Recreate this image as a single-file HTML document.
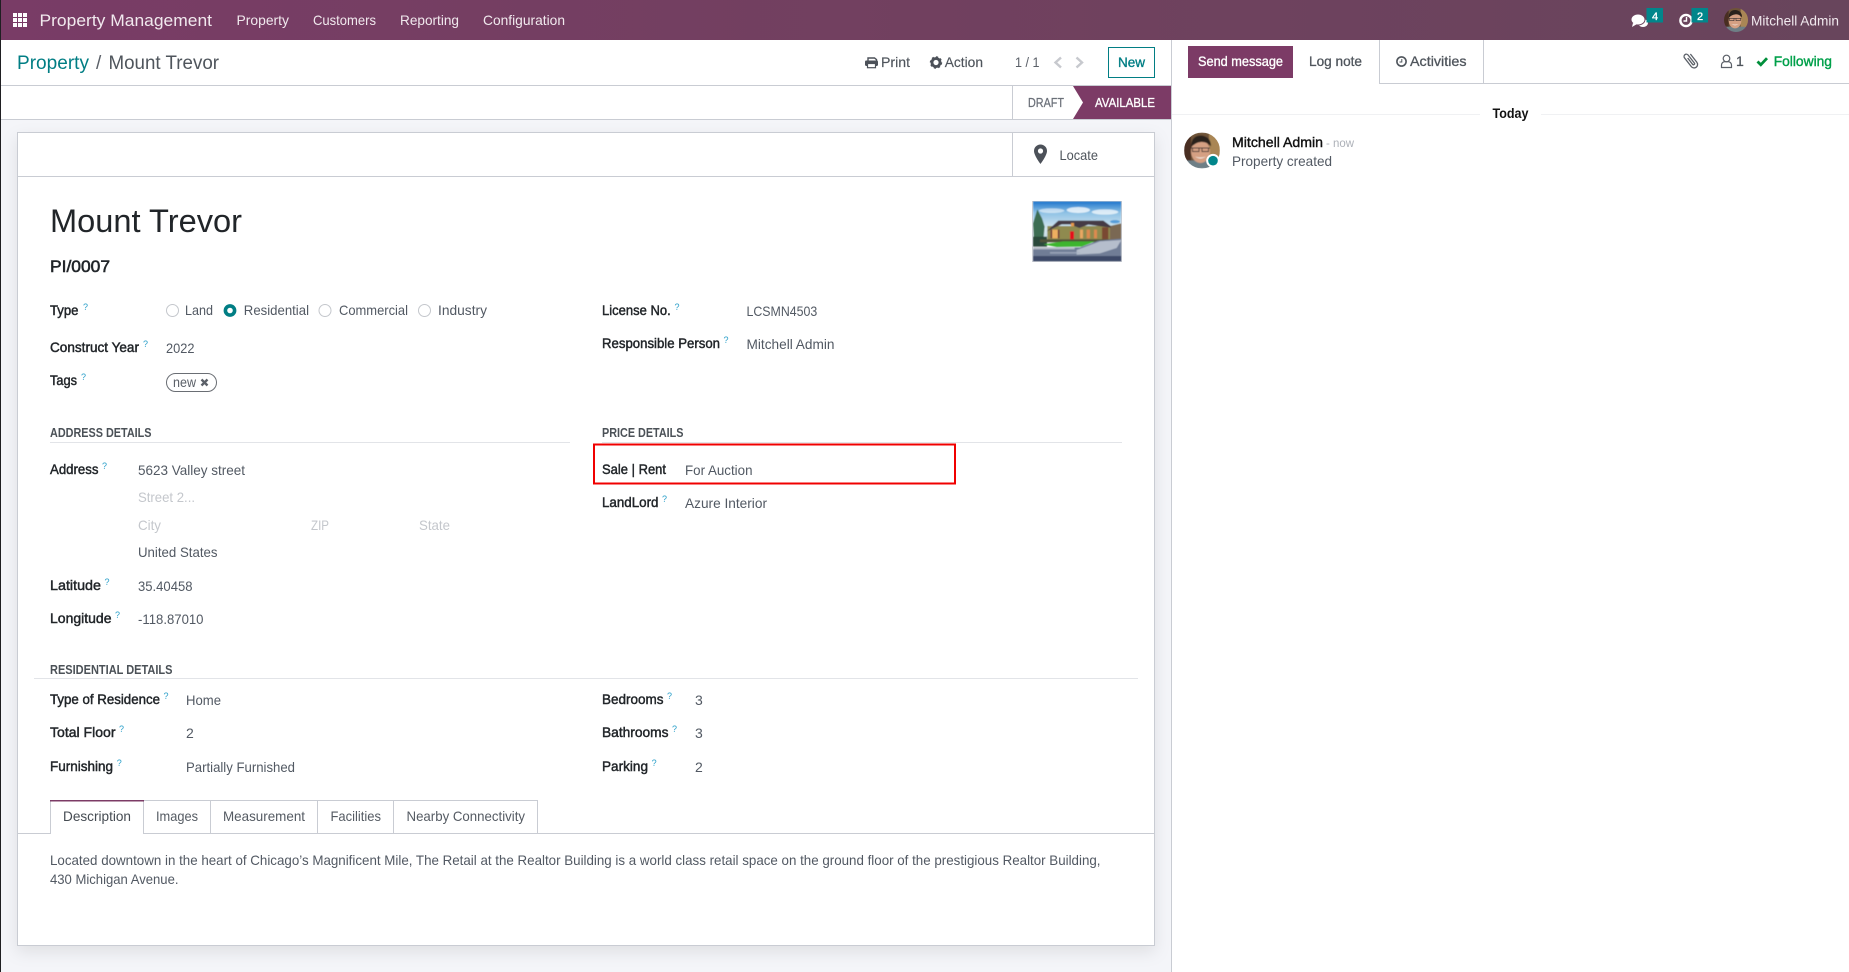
<!DOCTYPE html>
<html lang="en"><head><meta charset="utf-8"><title>Property Management</title>
<style>
html,body{margin:0;padding:0;background:#f4f5f9;width:1849px;height:972px;overflow:hidden}
svg{display:block}
text{font-family:"Liberation Sans",Arial,sans-serif;font-size:14px;white-space:pre}
.l{fill:#212529;stroke:#212529;stroke-width:.45px}
.v{fill:#525963}
.p{fill:#c4c7cc}
.h{fill:#4b5157;font-size:12.5px;font-weight:bold}
.q{fill:#2a9fc9;font-size:9px}
.m{fill:#f1e9ee;font-size:14px}
.t{fill:#555b63}
</style></head><body>
<svg width="1849" height="972" viewBox="0 0 1849 972" xmlns="http://www.w3.org/2000/svg">
<defs>
<linearGradient id="bar" x1="0" x2="1" y1="0" y2="0"><stop offset="0" stop-color="#793c66"/><stop offset=".5" stop-color="#71405f"/><stop offset="1" stop-color="#68455c"/></linearGradient>
<linearGradient id="sky" x1="0" x2="0" y1="0" y2="1"><stop offset="0" stop-color="#1c74cc"/><stop offset=".3" stop-color="#8cc0e4"/><stop offset=".75" stop-color="#d8e9f0"/><stop offset="1" stop-color="#c8dde6"/></linearGradient>
<filter id="sh" x="-5%" y="-5%" width="110%" height="110%"><feDropShadow dx="0" dy="6" stdDeviation="8" flood-color="#000" flood-opacity=".09"/></filter>
<filter id="b1" x="-5%" y="-5%" width="110%" height="110%"><feGaussianBlur stdDeviation="1.2"/></filter>
<filter id="b2" x="-5%" y="-5%" width="110%" height="110%"><feGaussianBlur stdDeviation=".5"/></filter>
<clipPath id="av"><circle cx="18" cy="18" r="18"/></clipPath>
<clipPath id="im"><rect x="39" y="34" width="265" height="180"/></clipPath>
<g id="face"><g clip-path="url(#av)"><g filter="url(#b2)">
<rect width="36" height="36" fill="#6e5238"/>
<rect x="25" width="11" height="36" fill="#a98655"/>
<rect width="7" height="36" fill="#4a2f22"/>
<rect x="2" y="28" width="30" height="8" fill="#6e7f86"/>
<ellipse cx="16.500" cy="19" rx="9.500" ry="11.500" fill="#d5a083"/>
<path d="M7 15 Q7 3 17 3 Q27 4 27 14 Q23 9 17 9.500 Q11 10 7 15Z" fill="#2a211d"/>
<path d="M7 15.500H26M8.500 15.500h6.500v3.500h-6.500zM18 15.500h6.500v3.500h-6.500z" fill="none" stroke="#3a3230" stroke-width=".9"/>
<path d="M11 24 Q16.500 28 22 24 Q16.500 26 11 24Z" fill="#f4ece6"/>
</g></g></g>
</defs>

<!-- page -->
<rect width="1849" height="972" fill="#f4f5f9"/>
<rect x="1171" y="40" width="678" height="932" fill="#fff"/>
<rect x="1171" y="40" width="1" height="932" fill="#c9ccd3"/>

<!-- top bar -->
<rect width="1849" height="40" fill="url(#bar)"/>
<g fill="#fff">
<rect x="13" y="13" width="4" height="4"/><rect x="18" y="13" width="4" height="4"/><rect x="23" y="13" width="4" height="4"/>
<rect x="13" y="18" width="4" height="4"/><rect x="18" y="18" width="4" height="4"/><rect x="23" y="18" width="4" height="4"/>
<rect x="13" y="23" width="4" height="4"/><rect x="18" y="23" width="4" height="4"/><rect x="23" y="23" width="4" height="4"/>
</g>
<text x="39.5" y="26" style="font-size:17px;fill:#f1e9ee" textLength="172.5" lengthAdjust="spacingAndGlyphs">Property Management</text>
<text class="m" x="236.5" y="25" textLength="52.5" lengthAdjust="spacingAndGlyphs">Property</text>
<text class="m" x="313" y="25" textLength="63" lengthAdjust="spacingAndGlyphs">Customers</text>
<text class="m" x="400" y="25" textLength="59" lengthAdjust="spacingAndGlyphs">Reporting</text>
<text class="m" x="483" y="25" textLength="82" lengthAdjust="spacingAndGlyphs">Configuration</text>

<!-- systray -->
<ellipse cx="1643" cy="23" rx="5" ry="4" fill="#fff"/>
<ellipse cx="1638" cy="19.5" rx="7" ry="5.5" fill="#fff" stroke="#6a445d" stroke-width="1"/>
<path d="M1633 23 L1632 27 L1637 24Z" fill="#fff"/>
<rect x="1646.5" y="8" width="16.5" height="14.5" fill="#01868b"/>
<text x="1655" y="20" text-anchor="middle" style="font-size:11px;fill:#fff;stroke:#fff;stroke-width:.3px">4</text>
<circle cx="1686" cy="20.5" r="5.6" fill="none" stroke="#fff" stroke-width="2.4"/>
<path d="M1686.5 17v4h-3" fill="none" stroke="#fff" stroke-width="1.4"/>
<rect x="1691.5" y="8" width="16.5" height="14.5" fill="#01868b"/>
<text x="1700" y="20" text-anchor="middle" style="font-size:11px;fill:#fff;stroke:#fff;stroke-width:.3px">2</text>
<use href="#face" transform="translate(1724,8) scale(.667)"/>
<text class="m" x="1751" y="25.5" textLength="88" lengthAdjust="spacingAndGlyphs">Mitchell Admin</text>

<!-- control panel -->
<rect x="0" y="40" width="1171" height="79" fill="#fff"/>
<rect x="0" y="85" width="1171" height="1" fill="#c9ccd3"/>
<rect x="0" y="119" width="1171" height="1" fill="#c9ccd3"/>
<text x="17" y="69" style="font-size:19px;fill:#017e84" textLength="72" lengthAdjust="spacingAndGlyphs">Property</text>
<text x="96" y="69" style="font-size:19px;fill:#5b6068">/</text>
<text x="108.5" y="69" style="font-size:19px;fill:#4f555c" textLength="110.5" lengthAdjust="spacingAndGlyphs">Mount Trevor</text>

<!-- print icon -->
<g fill="#4c5159">
<path d="M868 61V58h6.500l2 1.600V61" fill="none" stroke="#4c5159" stroke-width="1.400"/>
<rect x="865" y="60.500" width="13" height="5.500" rx="1.200"/>
<rect x="867.500" y="63.500" width="8" height="4.200" fill="#fff" stroke="#4c5159" stroke-width="1.200"/>
</g>
<text x="881" y="67" style="fill:#4f555c;stroke:#4f555c;stroke-width:.15px" textLength="29" lengthAdjust="spacingAndGlyphs">Print</text>
<!-- gear -->
<circle cx="936" cy="62.500" r="4" fill="none" stroke="#4c5159" stroke-width="2.800"/>
<circle cx="936" cy="62.500" r="5.400" fill="none" stroke="#4c5159" stroke-width="1.600" stroke-dasharray="2.100 2.100"/>
<text x="944.700" y="67" style="fill:#4f555c;stroke:#4f555c;stroke-width:.15px" textLength="38.300" lengthAdjust="spacingAndGlyphs">Action</text>
<text x="1015" y="67" style="fill:#5b6068" textLength="24.500" lengthAdjust="spacingAndGlyphs">1 / 1</text>
<path d="M1061 57.500l-5.500 5 5.500 5M1076.500 57.500l5.500 5-5.500 5" fill="none" stroke="#c7c9ce" stroke-width="2.400"/>
<rect x="1108.500" y="47.500" width="46" height="30" fill="#fff" stroke="#017e84"/>
<text x="1118" y="67" style="fill:#017e84;stroke:#017e84;stroke-width:.35px" textLength="27" lengthAdjust="spacingAndGlyphs">New</text>

<!-- status bar -->
<rect x="1012" y="86" width="1" height="33" fill="#c9ccd3"/>
<text x="1028" y="107" style="font-size:12.500px;fill:#6b7079;stroke:#6b7079;stroke-width:.25px" textLength="36" lengthAdjust="spacingAndGlyphs">DRAFT</text>
<polygon points="1073,86 1171,86 1171,119 1073,119 1083,102.500" fill="#7c3b66"/>
<text x="1095" y="107" style="font-size:12.500px;fill:#fff;stroke:#fff;stroke-width:.3px" textLength="60" lengthAdjust="spacingAndGlyphs">AVAILABLE</text>

<!-- sheet -->
<rect x="17.500" y="132.500" width="1137" height="813" fill="#fff" stroke="#c9ccd3" filter="url(#sh)"/>
<rect x="18" y="176" width="1136" height="1" fill="#c9ccd3"/>
<rect x="1012" y="133" width="1" height="43" fill="#c9ccd3"/>
<path d="M1040.500 144.500a6.500 6.500 0 0 0-6.500 6.500c0 4.500 6.500 13 6.500 13s6.500-8.500 6.500-13a6.500 6.500 0 0 0-6.500-6.500z" fill="#4c5159"/>
<circle cx="1040.500" cy="151" r="2.600" fill="#fff"/>
<text x="1059.500" y="160" style="fill:#4f555c" textLength="38.500" lengthAdjust="spacingAndGlyphs">Locate</text>

<!-- photo -->
<rect x="1032.500" y="201.500" width="89" height="60" fill="#fff" stroke="#c9ccd3"/>
<g transform="translate(1020,190) scale(.33333)" clip-path="url(#im)"><g filter="url(#b1)">
<rect x="39" y="34" width="265" height="110" fill="url(#sky)"/>
<ellipse cx="95" cy="62" rx="38" ry="7" fill="#fff" opacity=".55"/>
<ellipse cx="175" cy="60" rx="35" ry="9" fill="#fff" opacity=".75"/>
<ellipse cx="255" cy="66" rx="40" ry="8" fill="#fff" opacity=".7"/>
<ellipse cx="285" cy="95" rx="15" ry="5" fill="#3f8fd6" opacity=".8"/>
<polygon points="262,110 304,100 304,152 262,152" fill="#7a6852"/>
<path d="M52 58 L66 85 L74 110 L70 150 L42 158 L39 100Z" fill="#3d6d52"/>
<rect x="39" y="140" width="42" height="30" fill="#2c4a3a"/>
<rect x="82" y="108" width="188" height="48" fill="#8f8a50"/>
<polygon points="80,124 115,92 250,92 272,108 272,113 205,104 178,114 150,103 125,103" fill="#453a44"/>
<rect x="97" y="119" width="16" height="26" fill="#f0ae60"/>
<rect x="92" y="119" width="4" height="26" fill="#702038"/><rect x="114" y="119" width="4" height="26" fill="#702038"/>
<rect x="153" y="99" width="9" height="10" fill="#e69a4a"/>
<rect x="150" y="124" width="12" height="24" fill="#e5101e"/>
<rect x="180" y="119" width="9" height="26" fill="#eaa762"/>
<rect x="200" y="119" width="10" height="26" fill="#dd8a50"/>
<rect x="222" y="119" width="9" height="26" fill="#dd8a50"/>
<rect x="246" y="112" width="19" height="36" fill="#7a4a30"/>
<rect x="60" y="148" width="210" height="9" fill="#4f5238"/>
<polygon points="70,163 130,154 225,154 185,170 110,171" fill="#3db52e"/>
<polygon points="39,172 180,172 235,152 304,146 304,214 39,214" fill="#6f7d96"/>
<polygon points="170,180 240,154 304,150 290,174 240,190 170,194" fill="#b5becc"/>
<rect x="39" y="172" width="125" height="6" fill="#b8bec8"/>
<rect x="39" y="198" width="265" height="16" fill="#3d4868"/>
<rect x="90" y="186" width="90" height="5" fill="#a9b3c4" opacity=".7"/>
</g></g>

<!-- heading -->
<text x="50" y="232" style="font-size:32px;fill:#212529" textLength="192" lengthAdjust="spacingAndGlyphs">Mount Trevor</text>
<text x="50" y="272" style="font-size:17px;fill:#212529;stroke:#212529;stroke-width:.55px" textLength="60" lengthAdjust="spacingAndGlyphs">PI/0007</text>

<!-- type row -->
<text class="l" x="50" y="315" textLength="28.500" lengthAdjust="spacingAndGlyphs">Type</text><text class="q" x="83" y="310">?</text>
<circle cx="172.500" cy="310.500" r="6" fill="#fff" stroke="#c4c7cc"/>
<text class="v" x="185" y="315" textLength="28" lengthAdjust="spacingAndGlyphs">Land</text>
<circle cx="230" cy="310.500" r="4.600" fill="#fff" stroke="#017e84" stroke-width="3.600"/>
<text class="v" x="243.800" y="315" textLength="65.200" lengthAdjust="spacingAndGlyphs">Residential</text>
<circle cx="325" cy="310.500" r="6" fill="#fff" stroke="#c4c7cc"/>
<text class="v" x="339" y="315" textLength="69" lengthAdjust="spacingAndGlyphs">Commercial</text>
<circle cx="424.500" cy="310.500" r="6" fill="#fff" stroke="#c4c7cc"/>
<text class="v" x="438" y="315" textLength="49" lengthAdjust="spacingAndGlyphs">Industry</text>

<text class="l" x="50" y="352" textLength="89" lengthAdjust="spacingAndGlyphs">Construct Year</text><text class="q" x="143" y="347">?</text>
<text class="v" x="166" y="353" textLength="28.500" lengthAdjust="spacingAndGlyphs">2022</text>
<text class="l" x="50" y="385" textLength="27" lengthAdjust="spacingAndGlyphs">Tags</text><text class="q" x="81" y="380">?</text>
<rect x="166.500" y="373.500" width="50" height="18" rx="9" fill="#fff" stroke="#6a6e74"/>
<text x="173" y="387" style="fill:#5b6068" textLength="23" lengthAdjust="spacingAndGlyphs">new</text>
<path d="M201.500 379.500l6 6m0-6l-6 6" stroke="#5b6068" stroke-width="2.400" fill="none"/>

<!-- license -->
<text class="l" x="602" y="315" textLength="68.700" lengthAdjust="spacingAndGlyphs">License No.</text><text class="q" x="674.500" y="310">?</text>
<text class="v" x="746.500" y="316" textLength="70.800" lengthAdjust="spacingAndGlyphs">LCSMN4503</text>
<text class="l" x="602" y="348" textLength="118" lengthAdjust="spacingAndGlyphs">Responsible Person</text><text class="q" x="723.500" y="343">?</text>
<text class="v" x="746.500" y="349" textLength="88" lengthAdjust="spacingAndGlyphs">Mitchell Admin</text>

<!-- address -->
<text class="h" x="50" y="437" textLength="101.500" lengthAdjust="spacingAndGlyphs">ADDRESS DETAILS</text>
<rect x="50" y="442" width="520" height="1" fill="#e2e4e8"/>
<text class="l" x="50" y="474" textLength="48.500" lengthAdjust="spacingAndGlyphs">Address</text><text class="q" x="102" y="469">?</text>
<text class="v" x="138" y="475" textLength="107" lengthAdjust="spacingAndGlyphs">5623 Valley street</text>
<text class="p" x="138" y="502" textLength="57" lengthAdjust="spacingAndGlyphs">Street 2...</text>
<text class="p" x="138" y="530" textLength="23" lengthAdjust="spacingAndGlyphs">City</text>
<text class="p" x="311" y="530" textLength="18" lengthAdjust="spacingAndGlyphs">ZIP</text>
<text class="p" x="419" y="530" textLength="31" lengthAdjust="spacingAndGlyphs">State</text>
<text class="v" x="138" y="557" textLength="79.500" lengthAdjust="spacingAndGlyphs">United States</text>
<text class="l" x="50" y="590" textLength="51" lengthAdjust="spacingAndGlyphs">Latitude</text><text class="q" x="104.500" y="585">?</text>
<text class="v" x="138" y="591" textLength="54.500" lengthAdjust="spacingAndGlyphs">35.40458</text>
<text class="l" x="50" y="623" textLength="61.500" lengthAdjust="spacingAndGlyphs">Longitude</text><text class="q" x="115" y="618">?</text>
<text class="v" x="138" y="624" textLength="65.500" lengthAdjust="spacingAndGlyphs">-118.87010</text>

<!-- price -->
<text class="h" x="602" y="437" textLength="81.500" lengthAdjust="spacingAndGlyphs">PRICE DETAILS</text>
<rect x="602" y="442" width="520" height="1" fill="#e2e4e8"/>
<rect x="594" y="444.500" width="361" height="39" fill="none" stroke="#f00000" stroke-width="2"/>
<text class="l" x="602" y="474" textLength="64" lengthAdjust="spacingAndGlyphs">Sale | Rent</text>
<text class="v" x="685" y="475" textLength="67.500" lengthAdjust="spacingAndGlyphs">For Auction</text>
<text class="l" x="602" y="507" textLength="56.500" lengthAdjust="spacingAndGlyphs">LandLord</text><text class="q" x="662" y="502">?</text>
<text class="v" x="685" y="508" textLength="82" lengthAdjust="spacingAndGlyphs">Azure Interior</text>

<!-- residential -->
<text class="h" x="50" y="674" textLength="122.500" lengthAdjust="spacingAndGlyphs">RESIDENTIAL DETAILS</text>
<rect x="34" y="678" width="1104" height="1" fill="#e2e4e8"/>
<text class="l" x="50" y="704" textLength="110" lengthAdjust="spacingAndGlyphs">Type of Residence</text><text class="q" x="163.500" y="699">?</text>
<text class="v" x="186" y="705" textLength="35" lengthAdjust="spacingAndGlyphs">Home</text>
<text class="l" x="50" y="737" textLength="65.500" lengthAdjust="spacingAndGlyphs">Total Floor</text><text class="q" x="119" y="732">?</text>
<text class="v" x="186" y="738">2</text>
<text class="l" x="50" y="771" textLength="63" lengthAdjust="spacingAndGlyphs">Furnishing</text><text class="q" x="116.700" y="766">?</text>
<text class="v" x="186" y="772" textLength="109" lengthAdjust="spacingAndGlyphs">Partially Furnished</text>
<text class="l" x="602" y="704" textLength="61.500" lengthAdjust="spacingAndGlyphs">Bedrooms</text><text class="q" x="667" y="699">?</text>
<text class="v" x="695" y="705">3</text>
<text class="l" x="602" y="737" textLength="66.500" lengthAdjust="spacingAndGlyphs">Bathrooms</text><text class="q" x="672" y="732">?</text>
<text class="v" x="695" y="738">3</text>
<text class="l" x="602" y="771" textLength="46" lengthAdjust="spacingAndGlyphs">Parking</text><text class="q" x="651.600" y="766">?</text>
<text class="v" x="695" y="772">2</text>

<!-- tabs -->
<rect x="18" y="833" width="1136" height="1" fill="#c9ccd3"/>
<path d="M143.500 800.500H537.500V833M143.500 800.500V834M210.500 800.500V833M317.500 800.500V833M393.500 800.500V833" fill="none" stroke="#c9ccd3"/>
<rect x="50" y="800" width="1" height="34" fill="#c9ccd3"/>
<rect x="51" y="801" width="92" height="33" fill="#fff"/>
<rect x="50" y="800" width="94" height="1.500" fill="#7c3b66"/>
<text x="63" y="821" style="fill:#454b52" textLength="68" lengthAdjust="spacingAndGlyphs">Description</text>
<text class="t" x="156" y="821" textLength="42" lengthAdjust="spacingAndGlyphs">Images</text>
<text class="t" x="223" y="821" textLength="82" lengthAdjust="spacingAndGlyphs">Measurement</text>
<text class="t" x="330.500" y="821" textLength="50.500" lengthAdjust="spacingAndGlyphs">Facilities</text>
<text class="t" x="406.500" y="821" textLength="118.500" lengthAdjust="spacingAndGlyphs">Nearby Connectivity</text>

<text class="v" x="50" y="865" textLength="1050.500" lengthAdjust="spacingAndGlyphs">Located downtown in the heart of Chicago’s Magnificent Mile, The Retail at the Realtor Building is a world class retail space on the ground floor of the prestigious Realtor Building,</text>
<text class="v" x="50" y="884" textLength="128.500" lengthAdjust="spacingAndGlyphs">430 Michigan Avenue.</text>

<!-- chatter -->
<rect x="1188" y="46" width="105" height="32" fill="#7c3b66"/>
<text x="1198" y="66" style="fill:#fff;stroke:#fff;stroke-width:.35px" textLength="85" lengthAdjust="spacingAndGlyphs">Send message</text>
<text x="1309" y="66" style="fill:#4f555c;stroke:#4f555c;stroke-width:.3px" textLength="53" lengthAdjust="spacingAndGlyphs">Log note</text>
<path d="M1379.500 40V83.500H1849M1483.500 40V83.500" fill="none" stroke="#c9ccd3"/>
<circle cx="1401.500" cy="61.500" r="4.600" fill="none" stroke="#4f555c" stroke-width="1.600"/>
<path d="M1401.800 59v3h-2.300" fill="none" stroke="#4f555c" stroke-width="1"/>
<text x="1410" y="66" style="fill:#4f555c;stroke:#4f555c;stroke-width:.3px" textLength="56.500" lengthAdjust="spacingAndGlyphs">Activities</text>
<path transform="rotate(-38 1691 60.500)" d="M1694.500 55v10.500a3.500 3.500 0 0 1-7 0v-11a2.300 2.300 0 0 1 4.600 0v10a1 1 0 0 1-2.200 0v-8" fill="none" stroke="#5b6068" stroke-width="1.300"/>
<circle cx="1726.500" cy="58.500" r="3.300" fill="none" stroke="#5b6068" stroke-width="1.200"/>
<path d="M1721.500 67.500v-2.500a3.300 3.300 0 0 1 3.300-3.300h3.400a3.300 3.300 0 0 1 3.300 3.300v2.500z" fill="none" stroke="#5b6068" stroke-width="1.200"/>
<text x="1736" y="66" style="fill:#4f555c;stroke:#4f555c;stroke-width:.3px">1</text>
<path d="M1757.500 61.500l3.300 3.300 6.200-6.600" fill="none" stroke="#008f3b" stroke-width="2.800"/>
<text x="1773.700" y="66" style="fill:#00a04a;stroke:#00a04a;stroke-width:.4px" textLength="58.300" lengthAdjust="spacingAndGlyphs">Following</text>

<rect x="1172" y="114" width="308" height="1" fill="#f0f1f3"/>
<rect x="1541" y="114" width="308" height="1" fill="#f0f1f3"/>
<text x="1492.500" y="118" style="font-weight:bold;fill:#111" textLength="36" lengthAdjust="spacingAndGlyphs">Today</text>

<use href="#face" transform="translate(1184,132.500)"/>
<circle cx="1213" cy="160.700" r="6.800" fill="#fff"/>
<circle cx="1213" cy="160.700" r="4.800" fill="#01868b"/>
<text x="1232" y="147" style="fill:#111;stroke:#111;stroke-width:.4px" textLength="91" lengthAdjust="spacingAndGlyphs">Mitchell Admin</text>
<text x="1326" y="147" style="font-size:12px;fill:#adb1b8" textLength="28" lengthAdjust="spacingAndGlyphs">- now</text>
<text class="v" x="1232" y="166" textLength="100" lengthAdjust="spacingAndGlyphs">Property created</text>

<rect x="0" y="0" width="1" height="972" fill="#1f1f22"/>
</svg>
</body></html>
